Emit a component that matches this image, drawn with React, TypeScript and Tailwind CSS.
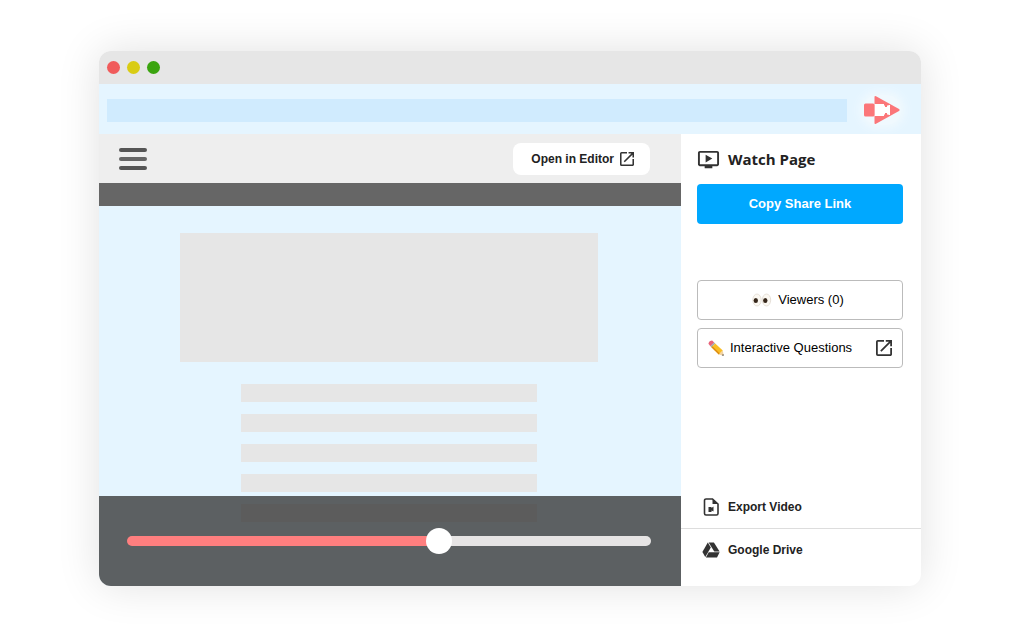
import { useState } from "react";
import { MdOutlineOndemandVideo } from "react-icons/md";

const skeletonLines = [1, 2, 3, 4, 5];

function OpenIcon({ className }: { className: string }) {
  return (
    <svg viewBox="3 3 18 18" fill="#333" className={className} aria-hidden="true">
      <path d="M19 19H5V5h7V3H5a2 2 0 0 0-2 2v14a2 2 0 0 0 2 2h14c1.1 0 2-.9 2-2v-7h-2v7zM14 3v2h3.59l-9.83 9.83 1.41 1.41L19 6.41V10h2V3h-7z" />
    </svg>
  );
}

function Logo() {
  return (
    <svg viewBox="0 0 38 30" className="h-[30px] w-[38px]" aria-hidden="true">
      <path d="M11.500 2q0-1.500 1.500-.7L36 14q1.500 1 0 2L13 28.700q-1.500.8-1.500-.7z" fill="#fb7679" />
      <path d="M11.500 9H21v1.500h1V12h2v-1.500h1.500V10H27v10h-1.500v-.5H24V18h-2v1.500h-1V21h-9.500z" fill="#fff" />
      <rect x="1" y="8.500" width="10.500" height="13" rx="1.500" fill="#fb7679" />
    </svg>
  );
}

function Eyes() {
  return (
    <svg viewBox="0 0 20 14" className="h-3.5 w-5" aria-hidden="true">
      <ellipse cx="5" cy="7" rx="4.200" ry="6" fill="#fbf8f2" stroke="#ddd6cb" strokeWidth=".7" />
      <ellipse cx="14.500" cy="7" rx="4.200" ry="6" fill="#fbf8f2" stroke="#ddd6cb" strokeWidth=".7" />
      <ellipse cx="3.800" cy="7.500" rx="2.200" ry="2.600" fill="#35261a" />
      <ellipse cx="13.300" cy="7.500" rx="2.200" ry="2.600" fill="#35261a" />
    </svg>
  );
}

function Pencil() {
  return (
    <svg viewBox="0 0 16 16" className="size-4" aria-hidden="true">
      <path d="M4.200.6Q1.200.6.400 3.800l2 2.400 3.800-3.800z" fill="#e8637a" />
      <path d="M6.200 2.400 2.400 6.200l1 1 3.800-3.800z" fill="#9aa5ad" />
      <path d="M7.200 3.400 3.400 7.200l7.400 7.300 4-4z" fill="#f9bd25" />
      <path d="m4.400 6.200-1 1 7.400 7.300 1-1z" fill="#dd8b12" />
      <path d="m14.800 10.500-4 4 4.900 1.300z" fill="#f3d3a2" />
      <path d="m15.300 13.900-1.500 1.400 1.900.5z" fill="#333" />
    </svg>
  );
}

function FileIcon() {
  return (
    <svg viewBox="0 0 16 18" className="h-[18px] w-4" fill="none" aria-hidden="true">
      <path d="M3 1h6.500L15 6v9.500a1.500 1.500 0 0 1-1.500 1.500H3a1.500 1.500 0 0 1-1.500-1.500v-13A1.500 1.500 0 0 1 3 1z" stroke="#333" strokeWidth="1.600" />
      <path d="M9.500 1v5H15z" fill="#333" />
      <path d="M5.500 9h3v1l2-1.500v5l-2-1v1.500h-3z" fill="#333" />
    </svg>
  );
}

function DriveIcon() {
  return (
    <svg viewBox="0 0 18 16" className="h-4 w-[18px]" fill="#333" aria-hidden="true">
      <path d="M5.800.5 8.800 5.500 3.300 15 .4 10z" />
      <path d="M6.600.5h5.300l5.700 9h-5.300z" />
      <path d="M6.700 10.300h10.900L15 15.400H3.900z" />
    </svg>
  );
}

export default function App() {
  const [progress, setProgress] = useState(60);

  return (
    <div className="min-h-screen bg-white px-[99px] py-[51px] font-['Liberation_Sans',sans-serif] text-[#222]">
      <div className="overflow-hidden rounded-xl bg-white shadow-[0_0_44px_rgba(0,0,0,0.12)]">
        <div className="flex h-[33px] items-center gap-[7px] bg-[#e6e6e6] px-2">
          <span className="size-[13px] rounded-full bg-[#f05b5b]" />
          <span className="size-[13px] rounded-full bg-[#d9cc14]" />
          <span className="size-[13px] rounded-full bg-[#3ba40f]" />
        </div>

        <div className="flex h-[50px] items-center bg-[#e5f5ff] pt-0.5 pr-5 pl-2">
          <input
            type="text"
            aria-label="Address"
            className="h-[23px] min-w-0 flex-1 bg-[#d0ebfe] px-2 text-xs outline-none"
          />
          <div className="ml-4 rounded-full bg-[#f0f9fe] shadow-[0_0_8px_4px_#f0f9fe]">
            <Logo />
          </div>
        </div>

        <div className="flex">
          <main className="min-w-0 flex-1">
            <div className="flex h-[49px] items-center justify-between bg-[#eeeeee] pr-[31px] pl-5">
              <button type="button" aria-label="Menu" className="flex w-7 flex-col gap-[5px]">
                <span className="h-[4px] w-full rounded-full bg-[#555]" />
                <span className="h-[4px] w-full rounded-full bg-[#666]" />
                <span className="h-[4px] w-full rounded-full bg-[#555]" />
              </button>
              <button
                type="button"
                className="flex h-8 items-center gap-1.5 rounded-lg bg-white pr-4 pl-[18px] text-xs font-bold"
              >
                Open in Editor
                <OpenIcon className="size-3.5" />
              </button>
            </div>
            <div className="h-[23px] bg-[#666]" />

            <div className="relative h-[380px] overflow-hidden bg-[#e5f5ff] pt-[27px] pr-0.5">
              <div className="mx-auto h-[129px] w-[72%] bg-[#e6e6e6]" />
              <div className="mx-auto mt-[22px] flex w-[51%] flex-col gap-3">
                {skeletonLines.map((line) => (
                  <div key={line} className="h-[18px] bg-[#e6e6e6]" />
                ))}
              </div>

              {/* translucent player bar over the page */}
              <div className="absolute inset-x-0 bottom-0 flex h-[90px] items-center bg-[#2e2d2d]/75 pr-[30px] pl-7">
                <input
                  type="range"
                  aria-label="Playback position"
                  value={progress}
                  onChange={(e) => setProgress(Number(e.target.value))}
                  style={{ "--played": `${progress}%` } as React.CSSProperties}
                  className="h-[26px] w-full appearance-none bg-transparent [&::-webkit-slider-runnable-track]:h-2.5 [&::-webkit-slider-runnable-track]:rounded-full [&::-webkit-slider-runnable-track]:bg-[linear-gradient(to_right,#ff7f7f_var(--played),#e6e4e4_var(--played))] [&::-webkit-slider-thumb]:-mt-2 [&::-webkit-slider-thumb]:size-[26px] [&::-webkit-slider-thumb]:appearance-none [&::-webkit-slider-thumb]:rounded-full [&::-webkit-slider-thumb]:bg-white"
                />
              </div>
            </div>
          </main>

          <aside className="flex w-[240px] flex-col pb-[15px]">
            <div className="flex flex-col pr-[18px] pl-4">
              <h1 className="flex h-[50px] items-center gap-2 font-['Open_Sans',sans-serif] text-[15px] font-bold">
                <MdOutlineOndemandVideo className="size-[23px] text-[#333]" />
                Watch Page
              </h1>
              <button type="button" className="h-10 rounded bg-[#00a8ff] text-[13px] font-bold text-white">
                Copy Share Link
              </button>
              <button
                type="button"
                className="mt-14 flex h-10 items-center justify-center gap-1.5 rounded border border-[#bbb] pr-1 text-[13px] text-black"
              >
                <Eyes />
                Viewers (0)
              </button>
              <button
                type="button"
                className="mt-2 flex h-10 items-center gap-1.5 rounded border border-[#bbb] px-2.5 text-[13px] text-black"
              >
                <Pencil />
                Interactive Questions
                <OpenIcon className="ml-auto size-4" />
              </button>
            </div>

            <div className="mt-auto text-xs font-bold">
              <button type="button" className="flex h-11 w-full items-center gap-2 border-b border-[#ddd] px-[21px]">
                <span className="flex w-[18px] justify-center">
                  <FileIcon />
                </span>
                Export Video
              </button>
              <button type="button" className="flex h-[42px] w-full items-center gap-2 px-[21px]">
                <DriveIcon />
                Google Drive
              </button>
            </div>
          </aside>
        </div>
      </div>
    </div>
  );
}
